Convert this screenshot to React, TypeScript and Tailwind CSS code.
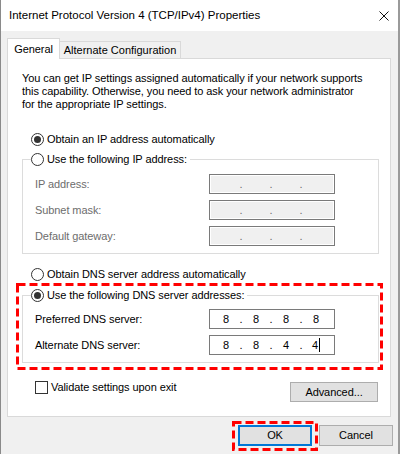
import React from "react";

function Radio({ checked }: { checked?: boolean }) {
  return (
    <span className="w-[13px] h-[13px] rounded-full border border-[#333333] bg-white flex items-center justify-center shrink-0">
      {checked && <span className="w-[7px] h-[7px] rounded-full bg-[#333333]" />}
    </span>
  );
}

function IpBox({ values, disabled, caret }: { values: string[]; disabled?: boolean; caret?: boolean }) {
  return (
    <div
      className={
        disabled
          ? "w-[126px] h-[20px] border border-[#7a7a7a] bg-[#f0f0f0] shadow-[inset_0_0_0_1px_#ffffff] flex items-center pl-[1px]"
          : "w-[126px] h-[20px] border border-[#7a7a7a] bg-white flex items-center pl-[1px]"
      }
    >
      {values.map((v, i) => (
        <React.Fragment key={i}>
          {i > 0 && (
            <span className={disabled ? "w-0 flex justify-center text-[#6d6d6d]" : "w-0 flex justify-center"}>.</span>
          )}
          <span className="w-[30px] flex justify-center items-center">
            <span>{v}</span>
            {caret && i === values.length - 1 && <span className="ml-[1px] w-px h-[14px] bg-black" />}
          </span>
        </React.Fragment>
      ))}
    </div>
  );
}

function Row({ label, disabled, children }: { label: string; disabled?: boolean; children: React.ReactNode }) {
  return (
    <div className="flex items-center h-[20px]">
      <span className={disabled ? "w-[174px] text-[#6d6d6d]" : "w-[174px]"}>{label}</span>
      {children}
    </div>
  );
}

export default function App() {
  return (
    <div className="relative w-[400px] h-[454px] overflow-hidden bg-[#f0f0f0] border-l border-l-[#8a8a8a] border-r-2 border-r-[#9a9a9a] text-[11px] leading-[13px] tracking-[-0.08px] text-black font-['Liberation_Sans',Arial,sans-serif]">
      {/* Title bar */}
      <div className="h-[31px] bg-white flex items-center justify-between pl-[8px] pr-[9px]">
        <span className="text-[11.5px] tracking-normal">Internet Protocol Version 4 (TCP/IPv4) Properties</span>
        <svg width="10" height="10" viewBox="0 0 10 10" className="mt-[1px]">
          <path d="M0.5 0.5 L9.5 9.5 M9.5 0.5 L0.5 9.5" stroke="#111" strokeWidth="1" fill="none" />
        </svg>
      </div>

      <div className="pl-[6px] pt-[7px]">
        {/* Tabs */}
        <div className="flex items-end h-[20px]">
          <div className="relative z-10 -mb-px h-[21px] w-[53px] bg-white border border-b-0 border-[#d9d9d9] flex items-center justify-center">
            General
          </div>
          <div className="h-[17px] w-[121px] bg-[#f0f0f0] border-t border-r border-[#d9d9d9] flex items-center justify-center tracking-normal">
            Alternate Configuration
          </div>
        </div>

        {/* Panel */}
        <div className="w-[384px] h-[359px] border border-[#d9d9d9] bg-white pl-[14px] pt-[13px]">
          <p className="whitespace-nowrap">
            You can get IP settings assigned automatically if your network supports
            <br />
            this capability. Otherwise, you need to ask your network administrator
            <br />
            for the appropriate IP settings.
          </p>

          <div className="mt-[21px] ml-[9px] flex items-center h-[14px] gap-[3px]">
            <Radio checked />
            <span>Obtain an IP address automatically</span>
          </div>

          <fieldset className="mt-[6px] w-[357px] border border-[#dcdcdc] p-0">
            <legend className="ml-[8px] pr-[3px] flex items-center h-[14px] gap-[3px]">
              <Radio />
              <span>Use the following IP address:</span>
            </legend>
            <div className="pl-[12px] pt-[8px] pb-[7px] flex flex-col gap-[6px]">
              <Row label="IP address:" disabled>
                <IpBox values={["", "", "", ""]} disabled />
              </Row>
              <Row label="Subnet mask:" disabled>
                <IpBox values={["", "", "", ""]} disabled />
              </Row>
              <Row label="Default gateway:" disabled>
                <IpBox values={["", "", "", ""]} disabled />
              </Row>
            </div>
          </fieldset>

          <div className="mt-[13px] ml-[9px] flex items-center h-[14px] gap-[3px]">
            <Radio />
            <span>Obtain DNS server address automatically</span>
          </div>

          <fieldset className="mt-[7px] w-[357px] border border-[#dcdcdc] p-0">
            <legend className="ml-[8px] pr-[3px] flex items-center h-[14px] gap-[3px]">
              <Radio checked />
              <span>Use the following DNS server addresses:</span>
            </legend>
            <div className="pl-[12px] pt-[7px] pb-[7px] flex flex-col gap-[6px]">
              <Row label="Preferred DNS server:">
                <IpBox values={["8", "8", "8", "8"]} />
              </Row>
              <Row label="Alternate DNS server:">
                <IpBox values={["8", "8", "4", "4"]} caret />
              </Row>
            </div>
          </fieldset>

          <div className="mt-[18px] w-[356px] flex justify-between items-start">
            <div className="ml-[13px] flex items-center gap-[3px] h-[13px]">
              <span className="w-[13px] h-[13px] border border-[#333333] bg-white shrink-0" />
              <span>Validate settings upon exit</span>
            </div>
            <button className="mt-[1px] w-[88px] h-[20px] bg-[#e1e1e1] border border-[#adadad] flex items-center justify-center">
              Advanced...
            </button>
          </div>
        </div>

        {/* Bottom buttons */}
        <div className="mt-[8px] flex justify-end gap-[7px] pr-[5px]">
          <button className="w-[74px] h-[21px] bg-[#e1e1e1] border-2 border-[#0078d7] flex items-center justify-center">
            OK
          </button>
          <button className="w-[74px] h-[21px] bg-[#e1e1e1] border border-[#adadad] flex items-center justify-center">
            Cancel
          </button>
        </div>
      </div>

      {/* Annotation overlays */}
      <svg className="absolute left-[15px] top-[283px] pointer-events-none" width="367" height="87" viewBox="0 0 367 87">
        <rect x="1.5" y="1.5" width="364" height="84" fill="none" stroke="#ff0000" strokeWidth="3" strokeDasharray="8 4" />
      </svg>
      <svg className="absolute left-[231px] top-[421px] pointer-events-none" width="86" height="30" viewBox="0 0 86 30">
        <rect x="1.5" y="1.5" width="83" height="27" fill="none" stroke="#ff0000" strokeWidth="3" strokeDasharray="8 4" />
      </svg>
    </div>
  );
}
